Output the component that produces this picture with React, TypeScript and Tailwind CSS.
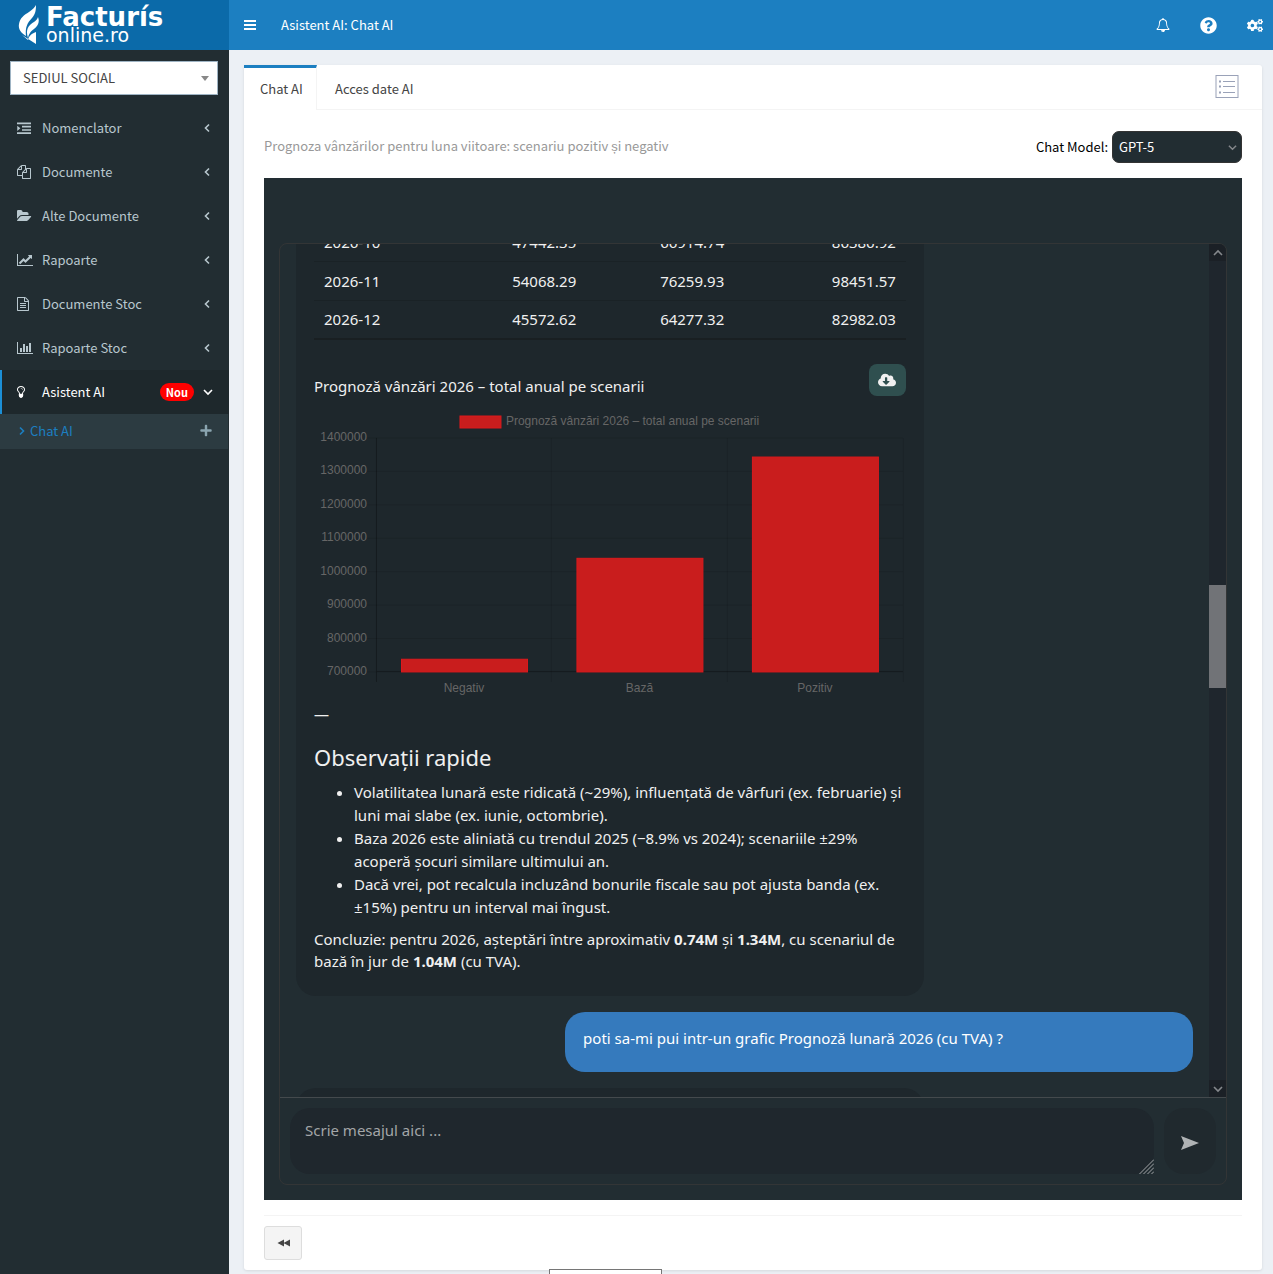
import { type ReactNode } from 'react'
import { FaCloudDownloadAlt, FaCogs, FaPlus, FaQuestionCircle } from 'react-icons/fa'

type IconProps = { path: string; box: string; className: string }

function Icon({ path, box, className }: IconProps) {
  return (
    <svg viewBox={box} className={className} fill="currentColor" aria-hidden="true">
      <path d={path} />
    </svg>
  )
}

const paths = {
  indent:
    'M0 200h1792v220H0zM640 620h1152v220H640zM640 1040h1152v220H640zM0 1450h1792v220H0zM32 600l400 340-400 340z',
  copy: 'M1696 384q40 0 68 28t28 68v1216q0 40-28 68t-68 28h-960q-40 0-68-28t-28-68v-288h-544q-40 0-68-28t-28-68v-672q0-40 20-88t48-76l408-408q28-28 76-48t88-20h416q40 0 68 28t28 68v328q68-40 128-40h416zM1152 597l-299 299h299v-299zM512 213l-299 299h299v-299zM708 860l316-316v-416h-384v416q0 40-28 68t-68 28h-416v640h512v-256q0-40 20-88t48-76zM1664 1664v-1152h-384v416q0 40-28 68t-68 28h-416v640h896z',
  folder:
    'M1815 952q0 31-31 66l-336 396q-43 51-120.5 86.5t-143.5 35.5h-1088q-34 0-60.5-13t-26.5-43q0-31 31-66l336-396q43-51 120.5-86.5t143.5-35.5h1088q34 0 60.5 13t26.5 43zM1472 608v160h-832q-94 0-197 47.5t-164 119.5l-337 396-5 6q0-4-.5-12.5t-.5-12.5v-960q0-92 66-158t158-66h320q92 0 158 66t66 158v32h544q92 0 158 66t66 158z',
  lineChart:
    'M2048 1536v128h-2048v-1536h128v1408h1920zM1920 288v435q0 21-19.5 29.5t-35.5-7.5l-121-121-633 633q-10 10-23 10t-23-10l-233-233-416 416-192-192 585-585q10-10 23-10t23 10l233 233 464-464-121-121q-16-16-7.5-35.5t29.5-19.5h435q14 0 23 9t9 23z',
  file: 'M1468 380q28 28 48 76t20 88v1152q0 40-28 68t-68 28h-1344q-40 0-68-28t-28-68v-1600q0-40 28-68t68-28h896q40 0 88 20t76 48zM1024 136v376h376q-10-29-22-41l-313-313q-12-12-41-22zM1408 1664v-1024h-416q-40 0-68-28t-28-68v-416h-768v1536h1280zM384 800q0-14 9-23t23-9h704q14 0 23 9t9 23v64q0 14-9 23t-23 9h-704q-14 0-23-9t-9-23v-64zM1120 1024q14 0 23 9t9 23v64q0 14-9 23t-23 9h-704q-14 0-23-9t-9-23v-64q0-14 9-23t23-9h704zM1120 1280q14 0 23 9t9 23v64q0 14-9 23t-23 9h-704q-14 0-23-9t-9-23v-64q0-14 9-23t23-9h704z',
  barChart:
    'M640 896v512h-256v-512h256zM1024 384v1024h-256v-1024h256zM2048 1536v128h-2048v-1536h128v1408h1920zM1408 640v768h-256v-768h256zM1792 256v1152h-256v-1152h256z',
  bulb: 'M736 576q0 13-9.5 22.5t-22.5 9.5-22.5-9.5-9.5-22.5q0-46-54-71t-106-25q-13 0-22.5-9.5t-9.5-22.5 9.5-22.5 22.5-9.5q50 0 99.5 16t87 54 37.5 90zM896 576q0-72-34.5-134t-90-101.5-123-62-136.5-22.5-136.5 22.5-123 62-90 101.5-34.5 134q0 101 68 180 10 11 30.5 33t30.5 33q128 153 141 298h228q13-145 141-298 10-11 30.5-33t30.5-33q68-79 68-180zM1024 576q0 155-103 268-45 49-74.5 87t-59.5 95.5-34 107.5q47 28 47 82 0 37-25 64 25 27 25 64 0 52-45 81 13 23 13 47 0 46-31.5 71t-77.5 25q-20 44-60 70t-87 26-87-26-60-70q-46 0-77.5-25t-31.5-71q0-24 13-47-45-29-45-81 0-37 25-64-25-27-25-64 0-54 47-82-4-50-34-107.5t-59.5-95.5-74.5-87q-103-113-103-268 0-99 44.5-184.5t117-142 164-89 186.5-32.5 186.5 32.5 164 89 117 142 44.5 184.5z',
  bell: 'M912 1696q0-16-16-16-59 0-101.5-42.5t-42.5-101.5q0-16-16-16t-16 16q0 73 51.5 124.5t124.5 51.5q16 0 16-16zM246 1408h1300q-266-300-266-832 0-51-24-105t-69-103-121.5-80.5-169.5-31.5-169.5 31.5-121.5 80.5-69 103-24 105q0 532-266 832zM1728 1408q0 52-38 90t-90 38h-448q0 106-75 181t-181 75-181-75-75-181h-448q-52 0-90-38t-38-90q50-42 91-88t85-119.5 74.5-158.5 50-206 19.5-260q0-152 117-282.5t307-158.5q-8-19-8-39 0-40 28-68t68-28 68 28 28 68q0 20-8 39 190 28 307 158.5t117 282.5q0 139 19.5 260t50 206 74.5 158.5 85 119.5 91 88z',
}

const menu = [
  { label: 'Nomenclator', path: paths.indent, box: '0 0 1792 1792', size: 'h-[14px] w-[14px]' },
  { label: 'Documente', path: paths.copy, box: '0 0 1792 1792', size: 'h-[14px] w-[14px]' },
  { label: 'Alte Documente', path: paths.folder, box: '0 0 1920 1792', size: 'h-[14px] w-[15px]' },
  { label: 'Rapoarte', path: paths.lineChart, box: '0 0 2048 1792', size: 'h-[14px] w-[16px]' },
  { label: 'Documente Stoc', path: paths.file, box: '0 0 1536 1792', size: 'h-[14px] w-[12px]' },
  { label: 'Rapoarte Stoc', path: paths.barChart, box: '0 0 2048 1792', size: 'h-[14px] w-[16px]' },
]

const rows = [
  ['2026-10', '47442.35', '66914.74', '86386.92'],
  ['2026-11', '54068.29', '76259.93', '98451.57'],
  ['2026-12', '45572.62', '64277.32', '82982.03'],
]

const ticks = [1400000, 1300000, 1200000, 1100000, 1000000, 900000, 800000, 700000]

const bars = [
  { label: 'Negativ', value: 738000 },
  { label: 'Bază', value: 1040000 },
  { label: 'Pozitiv', value: 1343000 },
]

function Chevron({ points, className }: { points: string; className: string }) {
  return (
    <svg viewBox="0 0 10 10" className={className} fill="none" stroke="currentColor" strokeWidth="1.6" aria-hidden="true">
      <polyline points={points} />
    </svg>
  )
}

function Logo() {
  return (
    <a href="#" className="flex h-[50px] w-[229px] shrink-0 items-center gap-[7px] bg-[#0b6aa9] pl-[18px] text-white">
      <svg viewBox="0 0 21 40" className="h-[40px] w-[21px]" fill="currentColor" aria-hidden="true">
        <path d="M18 0C18 5 17.5 9 14 13C9 18 7 23 8 31C3 28 0 24 1 19C2 13 6 10 11 7C15 4 17 2 18 0Z" />
        <path d="M20 12C22 17 20 21 16 24C12 27 11 29 10 33C8 27 9 23 12 20C15 17 19 16 20 12Z" />
        <path d="M4 30L10 35C11 31 13 29 18 27V39Z" />
      </svg>
      <span className="flex flex-col font-['DejaVu_Sans',sans-serif]">
        <span className="text-[26px] font-bold leading-[20px]">Facturís</span>
        <span className="text-[19px] leading-[16px]">online.ro</span>
      </span>
    </a>
  )
}

function Header() {
  return (
    <header className="flex h-[50px] bg-[#1c7fc1] text-white">
      <Logo />
      <div className="flex flex-1 items-center pl-[15px] pr-[10px]">
        <button type="button" aria-label="Meniu" className="flex flex-col gap-[2px]">
          <span className="h-[2px] w-[12px] bg-white" />
          <span className="h-[2px] w-[12px] bg-white" />
          <span className="h-[2px] w-[12px] bg-white" />
        </button>
        <h1 className="ml-[25px] text-[13px]">Asistent AI: Chat AI</h1>
        <div className="ml-auto flex items-center gap-[30px]">
          <button type="button" aria-label="Notificări">
            <Icon path={paths.bell} box="0 0 1792 1792" className="h-[14px] w-[14px]" />
          </button>
          <button type="button" aria-label="Ajutor">
            <FaQuestionCircle className="h-[17px] w-[17px]" />
          </button>
          <button type="button" aria-label="Setări">
            <FaCogs className="h-[15px] w-[16px]" />
          </button>
        </div>
      </div>
    </header>
  )
}

function Sidebar() {
  return (
    <aside className="w-[229px] shrink-0 bg-[#222d32] text-[13px] text-[#b8c7ce]">
      <div className="relative mb-[11px] ml-[10px] mr-[11px] mt-[11px]">
        <select
          aria-label="Sediu"
          className="block h-[34px] w-full appearance-none border border-[#9fb4c4] bg-white pl-[12px] text-[#444]"
        >
          <option>SEDIUL SOCIAL</option>
        </select>
        <span className="pointer-events-none absolute right-[9px] top-[15px] border-x-4 border-t-[5px] border-x-transparent border-t-[#888]" />
      </div>
      <nav>
        {menu.map((item) => (
          <a key={item.label} href="#" className="flex h-[44px] items-center pl-[17px] pr-[17px]">
            <span className="w-[25px]">
              <Icon path={item.path} box={item.box} className={item.size} />
            </span>
            {item.label}
            <Chevron points="7,1.5 3.5,5 7,8.5" className="ml-auto h-[10px] w-[10px]" />
          </a>
        ))}
        <a
          href="#"
          className="flex h-[44px] items-center border-l-2 border-[#1c8fd6] bg-[#1e282c] pl-[15px] pr-[16px] text-white"
        >
          <span className="w-[25px]">
            <Icon path={paths.bulb} box="0 0 1024 1792" className="h-[14px] w-[8px]" />
          </span>
          Asistent AI
          <span className="ml-auto mr-[9px] rounded-full bg-[#ff0000] px-[6px] text-[11px] font-bold leading-[18px]">
            Nou
          </span>
          <Chevron points="1,3 5,7 9,3" className="h-[10px] w-[10px]" />
        </a>
        <div className="mr-px flex h-[35px] items-center bg-[#2c3b41] pb-[2px] pl-[17px] pr-[16px]">
          <a href="#" className="flex items-center gap-[3px] text-[#1c7fc1]">
            <Chevron points="3,1.5 6.5,5 3,8.5" className="h-[10px] w-[10px]" />
            Chat AI
          </a>
          <button type="button" aria-label="Chat nou" className="ml-auto text-[#8aa4af]">
            <FaPlus className="h-[13px] w-[12px]" />
          </button>
        </div>
      </nav>
    </aside>
  )
}

function ScenarioChart() {
  const y = (value: number) => 267 - ((value - 700000) / 700000) * 234
  return (
    <svg
      viewBox="0 0 592 295"
      className="block w-full font-['Liberation_Sans',sans-serif] text-[12px]"
      role="img"
      aria-label="Prognoză vânzări 2026 – total anual pe scenarii"
    >
      <rect x="146" y="11" width="41" height="12" fill="#c91d1d" stroke="#dc1a1d" />
      <text x="192" y="20" fill="#666">
        Prognoză vânzări 2026 – total anual pe scenarii
      </text>
      {ticks.map((tick) => (
        <g key={tick}>
          <line x1="53" x2="589" y1={y(tick)} y2={y(tick)} stroke="#000" strokeOpacity="0.1" />
          <text x="53" y={y(tick) + 3} textAnchor="end" fill="#666">
            {tick}
          </text>
        </g>
      ))}
      {[62.5, 237.5, 413.5, 589.5].map((x) => (
        <line key={x} x1={x} x2={x} y1="33" y2="277" stroke="#000" strokeOpacity={x < 100 ? 0.3 : 0.1} />
      ))}
      <line x1="63" x2="589" y1="266.5" y2="266.5" stroke="#000" strokeOpacity="0.25" />
      {bars.map((bar, i) => (
        <g key={bar.label}>
          <rect
            x={87.5 + i * 175.5}
            y={y(bar.value)}
            width="126"
            height={267 - y(bar.value)}
            fill="#c91d1d"
            stroke="#dc1a1d"
          />
          <text x={150 + i * 175.5} y="287" textAnchor="middle" fill="#666">
            {bar.label}
          </text>
        </g>
      ))}
    </svg>
  )
}

function BotMessage({ children }: { children: ReactNode }) {
  return (
    <article className="w-[70%] shrink-0 rounded-[20px] bg-[#1e272c] px-[18px] pb-[24px] text-[#f0f0f0]">
      {children}
    </article>
  )
}

function ForecastMessage() {
  return (
    <BotMessage>
      <table className="w-full border-b-2 border-[#191f22]">
        <tbody>
          {rows.map((row) => (
            <tr key={row[0]} className="h-[39px] border-t border-[#1a2226]">
              <td className="w-[23%] pl-[10px]">{row[0]}</td>
              <td className="w-[23%] pr-[10px] text-right">{row[1]}</td>
              <td className="w-[25%] pr-[10px] text-right">{row[2]}</td>
              <td className="pr-[10px] text-right">{row[3]}</td>
            </tr>
          ))}
        </tbody>
      </table>
      <div className="mt-[24px] flex h-[41px] items-start justify-between">
        <p className="pt-[11px]">Prognoză vânzări 2026 – total anual pe scenarii</p>
        <button
          type="button"
          aria-label="Descarcă graficul"
          className="flex h-[32px] w-[37px] items-center justify-center rounded-[8px] bg-[#2f4f4f]"
        >
          <FaCloudDownloadAlt className="h-[16px] w-[18px]" />
        </button>
      </div>
      <ScenarioChart />
      <p className="mt-[3px]">—</p>
      <h2 className="mt-[19px] text-[22px] leading-[26px]">Observații rapide</h2>
      <ul className="mt-[11px] list-disc pl-[40px] leading-[23px]">
        <li>
          Volatilitatea lunară este ridicată (~29%), influențată de vârfuri (ex. februarie) și luni mai slabe (ex.
          iunie, octombrie).
        </li>
        <li>
          Baza 2026 este aliniată cu trendul 2025 (−8.9% vs 2024); scenariile ±29% acoperă șocuri similare ultimului
          an.
        </li>
        <li>
          Dacă vrei, pot recalcula incluzând bonurile fiscale sau pot ajusta banda (ex. ±15%) pentru un interval mai
          îngust.
        </li>
      </ul>
      <p className="mt-[9px]">
        Concluzie: pentru 2026, așteptări între aproximativ <strong>0.74M</strong> și <strong>1.34M</strong>, cu
        scenariul de bază în jur de <strong>1.04M</strong> (cu TVA).
      </p>
    </BotMessage>
  )
}

function Scrollbar() {
  return (
    <div className="flex w-[17px] shrink-0 flex-col rounded-tr-[7px] bg-[#1f262d] text-[#85888c]">
      <span className="flex h-[17px] items-center justify-center rounded-tr-[7px] bg-[#1b2026]">
        <Chevron points="1,7 5,3 9,7" className="h-[10px] w-[10px]" />
      </span>
      <span className="mt-[324px] h-[103px] bg-[#717377]" />
      <span className="mt-auto flex h-[17px] items-center justify-center bg-[#1b2026]">
        <Chevron points="1,3 5,7 9,3" className="h-[10px] w-[10px]" />
      </span>
    </div>
  )
}

function ChatPanel() {
  return (
    <section className="mt-[15px] bg-[#222d32] px-[15px] pb-[15px] pt-[65px] font-['Noto_Sans',sans-serif] text-[15px] leading-[22px]">
      <div className="rounded-[8px] border border-[#333536]">
        <div className="flex h-[853px]">
          <div className="flex flex-1 flex-col justify-end gap-[16px] overflow-hidden px-[16px]">
            <ForecastMessage />
            <p className="min-h-[60px] w-[70%] shrink-0 self-end rounded-[20px] bg-[#357abd] px-[18px] pt-[15px] text-white">
              poti sa-mi pui intr-un grafic Prognoză lunară 2026 (cu TVA) ?
            </p>
            {/* next answer, only its top edge is scrolled into view */}
            <div className="h-[9px] w-[70%] shrink-0 overflow-hidden">
              <div className="h-[40px] rounded-t-[20px] bg-[#1e272c]" />
            </div>
          </div>
          <Scrollbar />
        </div>
        <form className="flex gap-[10px] border-t border-[#444a4d] p-[10px]">
          <div className="relative flex-1">
            <textarea
              aria-label="Mesaj"
              placeholder="Scrie mesajul aici ..."
              className="block h-[66px] w-full resize-none rounded-[20px] bg-[#1f272d] px-[15px] py-[11px] text-white placeholder:text-[#a3a6a8]"
            />
            <svg
              viewBox="0 0 15 15"
              className="pointer-events-none absolute bottom-0 right-0 h-[15px] w-[15px]"
              stroke="#a3a6a8"
              aria-hidden="true"
            >
              <path d="M0.5 15L15 0.5M4.5 15L15 4.5M8.5 15L15 8.5M12.5 15L15 12.5" />
            </svg>
          </div>
          <button
            type="button"
            aria-label="Trimite"
            className="flex w-[52px] items-center justify-center rounded-[20px] bg-[#20292e] pt-[4px] text-[#b0b3b5]"
          >
            <svg viewBox="0 0 18 14" className="h-[14px] w-[18px]" fill="currentColor" aria-hidden="true">
              <path d="M0 0L18 7L0 14L3 7Z" />
            </svg>
          </button>
        </form>
      </div>
    </section>
  )
}

function ChatCard() {
  return (
    <div className="rounded-[3px] bg-white pb-[10px] shadow-[0_1px_3px_rgba(0,0,0,0.1)]">
      <div className="flex h-[45px] text-[13px] text-[#444]">
        <a href="#" className="flex w-[73px] items-center border-r border-t-3 border-r-[#f4f4f4] border-t-[#1c7fc1] pl-[16px]">
          Chat AI
        </a>
        <div className="flex flex-1 items-center justify-between border-b border-[#f4f4f4] pl-[18px] pr-[23px]">
          <a href="#" className="pt-[3px]">
            Acces date AI
          </a>
          <button type="button" aria-label="Listă" className="text-[#9aa2b8]">
            <svg viewBox="0 0 24 24" className="h-[24px] w-[24px]" fill="none" stroke="currentColor" aria-hidden="true">
              <rect x="1" y="0.5" width="22" height="22" />
              <path d="M8 6.5h12M8 11.5h12M8 17.5h12" />
              <path d="M4 6.5h2M4 11.5h2M4 17.5h2" strokeWidth="2" />
            </svg>
          </button>
        </div>
      </div>
      <div className="px-[20px] pt-[21px]">
        <div className="flex h-[32px] items-center text-[13px]">
          <p className="pb-[3px] text-[#999]">Prognoza vânzărilor pentru luna viitoare: scenariu pozitiv și negativ</p>
          <label htmlFor="model" className="ml-auto mr-[4px] text-black">
            Chat Model:
          </label>
          <div className="relative">
            <select
              id="model"
              className="h-[32px] w-[130px] appearance-none rounded-[7px] border border-[#333] bg-[#222d32] pl-[6px] text-white"
            >
              <option>GPT-5</option>
            </select>
            <Chevron
              points="1,3 5,7 9,3"
              className="pointer-events-none absolute right-[5px] top-[12px] h-[9px] w-[9px] text-[#85888c]"
            />
          </div>
        </div>
        <ChatPanel />
        <hr className="mt-[15px] border-[#f4f4f4]" />
        <button
          type="button"
          aria-label="Înapoi"
          className="mt-[10px] flex h-[34px] w-[38px] items-center justify-center rounded-[3px] border border-[#ddd] bg-[#f4f4f4] text-[#444]"
        >
          <svg viewBox="0 0 13 8" className="h-[8px] w-[13px]" fill="currentColor" aria-hidden="true">
            <path d="M7 0.5V7.5L0.5 4ZM13 0.5V7.5L6.5 4Z" />
          </svg>
        </button>
      </div>
    </div>
  )
}

export default function App() {
  return (
    <div className="relative flex min-h-screen flex-col overflow-hidden bg-[#ecf0f5] font-['Noto_Sans_CJK_SC',sans-serif]">
      <Header />
      <div className="flex flex-1">
        <Sidebar />
        <main className="flex-1 pb-[4px] pl-[15px] pr-[11px] pt-[15px]">
          <ChatCard />
        </main>
      </div>
      {/* top edge of the status hint */}
      <div className="absolute bottom-0 left-[549px] h-[5px] w-[113px] border border-b-0 border-[#767676] bg-white" />
    </div>
  )
}
